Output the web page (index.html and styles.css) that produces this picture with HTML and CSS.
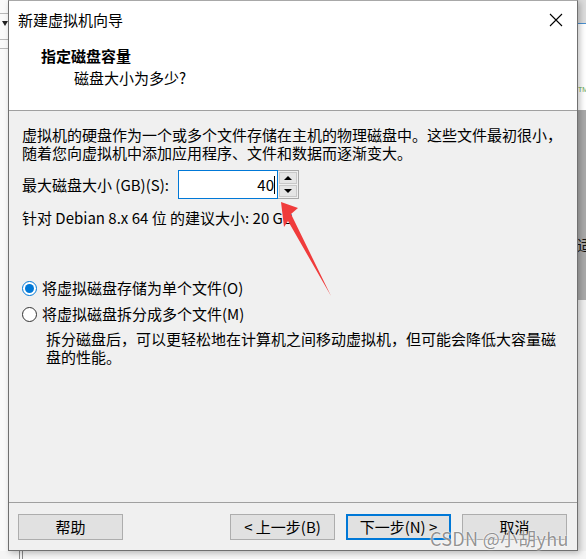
FILE: index.html
```html
<!DOCTYPE html>
<html lang="zh-CN">
<head>
<meta charset="utf-8">
<title>新建虚拟机向导</title>
<link rel="stylesheet" href="styles.css">
</head>
<body>
<div class="desk">
  <div class="bg-left">
    <div class="bl-line l1"></div>
    <div class="bl-tri"></div>
    <div class="bl-line l2"></div>
    <div class="bl-line l3"></div>
  </div>
  <div class="bg-right">
    <div class="br-top"></div>
    <div class="br-white"><span class="tm">TM</span></div>
    <div class="br-gray"><span class="br-char">适</span></div>
    <div class="br-low"></div>
  </div>
  <div class="bg-bottom"><span class="vl"></span><span class="vl"></span></div>

  <div class="dialog">
    <div class="titlebar">
      <span class="title">新建虚拟机向导</span>
      <svg class="close" width="14" height="14" viewBox="0 0 14 14"><path d="M1 1 L13 13 M13 1 L1 13" stroke="#000" stroke-width="1.1" fill="none"/></svg>
    </div>
    <div class="header">
      <div class="h1">指定磁盘容量</div>
      <div class="h2">磁盘大小为多少?</div>
    </div>
    <div class="body">
      <p class="intro">虚拟机的硬盘作为一个或多个文件存储在主机的物理磁盘中。这些文件最初很小，<br>随着您向虚拟机中添加应用程序、文件和数据而逐渐变大。</p>
      <div class="size-row">
        <span class="label">最大磁盘大小 (GB)(S):</span>
        <div class="input"><span class="val">40</span><span class="caret"></span></div>
        <div class="spin">
          <div class="sb"><span class="up"></span></div>
          <div class="sb"><span class="down"></span></div>
        </div>
      </div>
      <p class="rec">针对 Debian 8.x 64 位 的建议大小: 20 GB</p>
      <div class="radio-row first"><span class="radio checked"></span><span>将虚拟磁盘存储为单个文件(O)</span></div>
      <div class="radio-row second"><span class="radio"></span><span>将虚拟磁盘拆分成多个文件(M)</span></div>
      <p class="desc">拆分磁盘后，可以更轻松地在计算机之间移动虚拟机，但可能会降低大容量磁<br>盘的性能。</p>
    </div>
    <div class="footer">
      <button class="btn">帮助</button>
      <span class="spacer"></span>
      <button class="btn">&lt; 上一步(B)</button>
      <button class="btn default">下一步(N) &gt;</button>
      <button class="btn">取消</button>
    </div>
  </div>

  <svg class="arrow" width="586" height="559" viewBox="0 0 586 559">
    <polygon points="281,202 298,208 291,214 331,296 288,221 284,227" fill="#f03c3c"/>
  </svg>
  <div class="watermark">CSDN @小胡yhu</div>
</div>
</body>
</html>
```

FILE: styles.css
```css
* { box-sizing: border-box; }
html, body { margin: 0; padding: 0; }
body {
  width: 586px;
  height: 559px;
  overflow: hidden;
  background: #f0f0f0;
  font-family: "Noto Sans CJK SC", "Noto Sans", sans-serif;
  font-size: 15px;
  color: #000;
}
.desk {
  position: relative;
  width: 586px;
  height: 559px;
  background: #f3f3f3;
}

/* background application pieces */
.bg-left {
  position: absolute;
  left: 0; top: 0;
  width: 8px; height: 559px;
  background: #fafafa;
}
.bl-line { position: absolute; left: 0; width: 8px; height: 1px; background: #b8b8b8; }
.bl-line.l1 { top: 13px; }
.bl-line.l2 { top: 39px; }
.bl-line.l3 { top: 48px; }
.bl-tri {
  position: absolute; left: 2px; top: 21px;
  width: 0; height: 0;
  border-left: 3px solid transparent;
  border-right: 3px solid transparent;
  border-top: 5px solid #222;
}
.bg-right {
  position: absolute;
  left: 577px; top: 0;
  width: 9px; height: 559px;
  display: flex; flex-direction: column;
}
.br-top { height: 24px; background: #dcdcdc; border-bottom: 1px solid #4a90d0; }
.br-white { height: 86px; background: #fff; position: relative; }
.tm { position: absolute; left: 1px; top: 62px; font-size: 7px; color: #6aa84f; font-family: "Liberation Sans", sans-serif; }
.br-gray { height: 190px; background: #a9a9a9; position: relative; }
.br-char { position: absolute; left: 0; top: 126px; font-size: 15px; line-height: 18px; color: #111; }
.br-low { flex: 1; background: #efefef; }
.bg-bottom {
  position: absolute; left: 0; top: 551px; width: 586px; height: 8px;
  background: #f5f5f5;
}
.bg-bottom .vl { position: absolute; top: 0; width: 1px; height: 8px; background: #888; }
.bg-bottom .vl:first-child { left: 19px; }
.bg-bottom .vl:last-child { left: 22px; }

/* dialog window */
.dialog {
  position: absolute;
  left: 8px; top: 0;
  width: 570px; height: 551px;
  border: 1px solid #707070;
  border-top-color: #a8a8a8;
  background: #f0f0f0;
  display: flex;
  flex-direction: column;
  box-shadow: 2px 2px 6px rgba(0,0,0,0.25);
}
.titlebar {
  height: 37px;
  background: #fff;
  display: flex;
  align-items: center;
  padding: 0 14px 0 9px;
}
.title { flex: 1; line-height: 20px; margin-top: 1px; }
.close { display: block; }
.header {
  height: 73px;
  background: #fff;
  border-bottom: 1px solid #a0a0a0;
  padding: 9px 0 0 32px;
}
.h1 { font-weight: bold; line-height: 18px; }
.h2 { line-height: 18px; margin-top: 4px; padding-left: 33px; }

.body {
  flex: 1;
  padding: 15px 0 0 13px;
}
.body p { margin: 0; line-height: 18px; }
.size-row {
  display: flex;
  align-items: center;
  margin-top: 8px;
  height: 29px;
}
.label { width: 156px; line-height: 18px; }
.input {
  width: 100px; height: 29px;
  border: 1px solid #0078d7;
  background: #fff;
  display: flex;
  align-items: center;
  justify-content: flex-end;
  padding-right: 2px;
}
.val { line-height: 18px; }
.caret { width: 1px; height: 18px; background: #000; }
.spin {
  width: 21px; height: 29px;
  border: 1px solid #a8a8a8;
  border-left: none;
  display: flex; flex-direction: column;
  background: #f0f0f0;
  padding: 1px;
  gap: 1px;
}
.sb {
  flex: 1;
  background: #e5e5e5;
  border: 1px solid #c8c8c8;
  display: flex; align-items: center; justify-content: center;
}
.up { width: 0; height: 0; border-left: 4px solid transparent; border-right: 4px solid transparent; border-bottom: 4px solid #000; }
.down { width: 0; height: 0; border-left: 4px solid transparent; border-right: 4px solid transparent; border-top: 4px solid #000; }
.rec { margin-top: 10px !important; }

.radio-row {
  display: flex;
  align-items: center;
  height: 18px;
  line-height: 18px;
}
.radio-row.first { margin-top: 52px; }
.radio-row.second { margin-top: 8px; }
.radio {
  width: 15px; height: 15px;
  border-radius: 50%;
  border: 1px solid #333;
  background: #fff;
  margin-right: 5px;
  display: flex; align-items: center; justify-content: center;
}
.radio.checked { border-color: #0078d7; }
.radio.checked::after {
  content: "";
  width: 9px; height: 9px; border-radius: 50%;
  background: #0078d7;
}
.desc { margin-top: 7px !important; padding-left: 24px; }

.footer {
  height: 48px;
  border-top: 1px solid #a0a0a0;
  display: flex;
  align-items: flex-start;
  padding: 11px 10px 0 9px;
  gap: 11px;
}
.spacer { flex: 1; }
.btn {
  width: 105px; height: 26px;
  background: #e1e1e1;
  border: 1px solid #adadad;
  font-family: inherit;
  font-size: 15px;
  line-height: 18px;
  padding: 0;
  color: #000;
}
.btn.default { border: 2px solid #0078d7; }

.arrow { position: absolute; left: 0; top: 0; pointer-events: none; }
.watermark {
  position: absolute;
  left: 430px; top: 527px;
  font-family: "Noto Sans CJK SC", sans-serif;
  font-size: 18px;
  line-height: 22px;
  color: rgba(110,110,110,0.75);
  text-shadow: 0 0 2px #fff, 0 0 1px #fff;
  letter-spacing: 0.3px;
}
```
